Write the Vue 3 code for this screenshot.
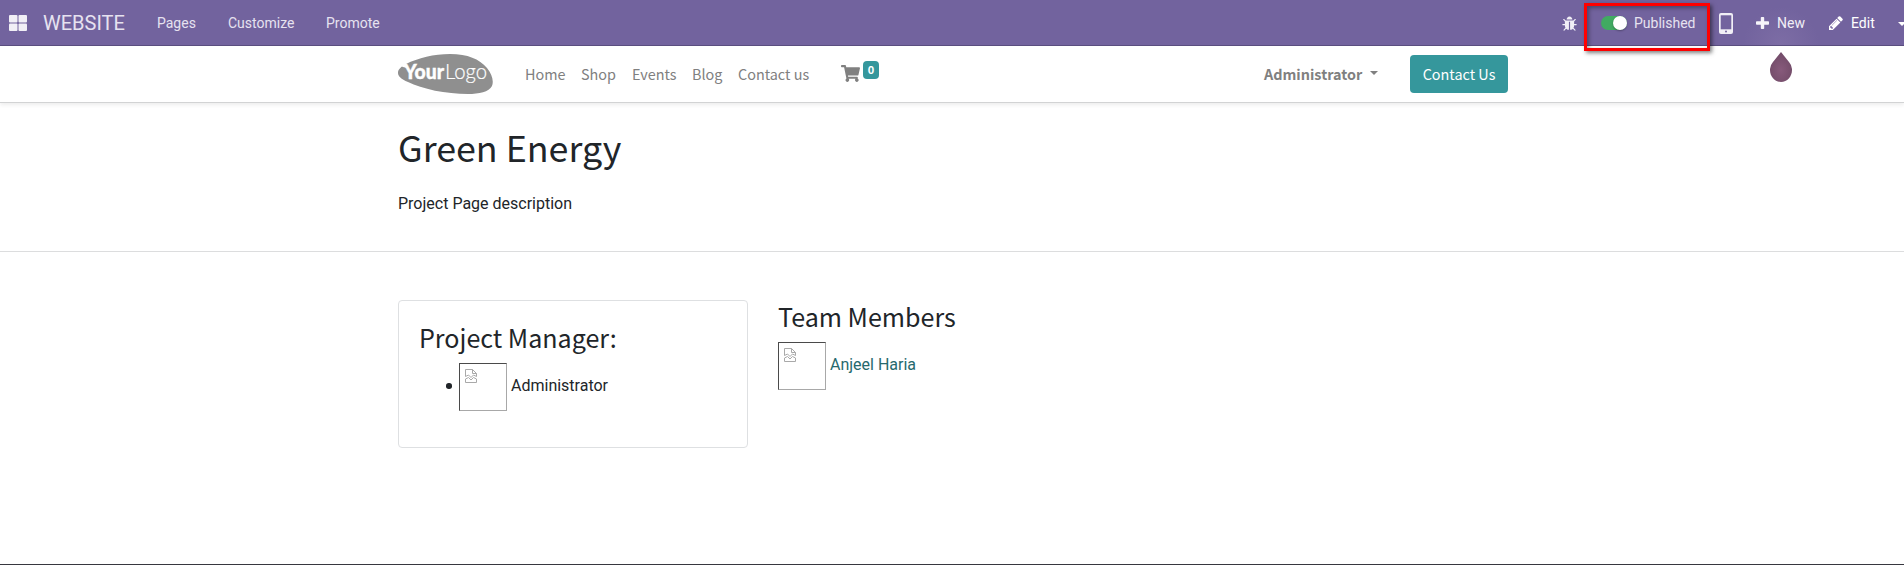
<script setup>
import { h } from 'vue'

const pages = [
  { label: 'Pages', cls: 'm-pages' },
  { label: 'Customize', cls: 'm-customize' },
  { label: 'Promote', cls: 'm-promote' }
]
const links = [
  { label: 'Home', cls: 'l-home' },
  { label: 'Shop', cls: 'l-shop' },
  { label: 'Events', cls: 'l-events' },
  { label: 'Blog', cls: 'l-blog' },
  { label: 'Contact us', cls: 'l-contact' }
]

const MissingImage = () =>
  h('span', { class: 'missing' }, [
    h('svg', { width: 12, height: 14, viewBox: '0 0 12 14', fill: 'none', stroke: '#a9a9a9' }, [
      h('path', { d: 'M.5 7.500V.5H7.500L11.500 4.500V7.500M7.500.5V4.500H11.500' }),
      h('path', { d: 'M.5 7.500L3.500 6L6 8.500L8.500 6L11.500 7.500M.5 13.500V10L3.500 8.500L6 11L8.500 8.500L11.500 10V13.500Z' })
    ])
  ])
</script>

<template>
  <div class="page">
    <header class="topbar">
      <svg class="apps" viewBox="0 0 18 16" fill="#f1eff6">
        <rect width="8.500" height="7.500" rx="1" /><rect x="9.500" width="8.500" height="7.500" rx="1" />
        <rect y="8.500" width="8.500" height="7.500" rx="1" /><rect x="9.500" y="8.500" width="8.500" height="7.500" rx="1" />
      </svg>
      <span class="brand">WEBSITE</span>
      <span v-for="p in pages" :key="p.label" class="menu" :class="p.cls">{{ p.label }}</span>
      <div class="tools">
        <svg class="bug" viewBox="64 0 1664 1664" fill="#f1eff6"><path d="M1696 960q0 26-19 45t-45 19h-224q0 171-67 290l208 209q19 19 19 45t-19 45q-18 19-45 19t-45-19l-198-197q-5 5-15 13t-42 28.500-65 36.500-82 29-97 13v-896h-128v896q-51 0-101.500-13.500t-87-33-66-39-43.500-32.500l-15-14-183 207q-20 21-48 21-24 0-43-16-19-18-20.500-44.500t15.500-46.500l202-227q-58-114-58-274h-224q-26 0-45-19t-19-45 19-45 45-19h224v-294l-173-173q-19-19-19-45t19-45 45-19 45 19l173 173h844l173-173q19-19 45-19t45 19 19 45-19 45l-173 173v294h224q26 0 45 19t19 45zm-480-576h-640q0-133 93.500-226.500t226.500-93.500 226.500 93.500 93.500 226.500z" /></svg>
        <span class="switch"><i></i></span>
        <span class="menu published">Published</span>
        <svg class="mobile" viewBox="0 0 14 21"><rect width="14" height="21" rx="2" fill="#f1eff6" /><rect x="1.700" y="2.300" width="10.600" height="14" fill="#72639e" /><circle cx="7" cy="18.500" r="1" fill="#72639e" /></svg>
        <svg class="plus" viewBox="0 0 13 12" fill="#f6f4fa"><rect x="4.800" width="3.400" height="12" rx=".8" /><rect y="4.300" width="13" height="3.400" rx=".8" /></svg>
        <span class="menu new">New</span>
        <svg class="pencil" viewBox="128 128 1536 1536" fill="#fff"><path d="M491 1536l91-91-235-235-91 91v107h128v128h107zm523-928q0-22-22-22-10 0-17 7l-542 542q-7 7-7 17 0 22 22 22 10 0 17-7l542-542q7-7 7-17zm-54-192l416 416-832 832h-416v-416zm683 96q0 53-37 90l-166 166-416-416 166-165q36-38 90-38 53 0 91 38l235 234q37 39 37 91z" /></svg>
        <span class="menu edit">Edit</span>
        <i class="caret light"></i>
      </div>
    </header>

    <nav class="sitebar">
      <svg class="logo" viewBox="0 0 95 40">
        <path d="M0 19C0 15 3 13 8 10C20 4 36 0 52 0C70 0 81 5 89 14C94 20 96 27 94 32C91 38 81 40 70 40C48 40 24 35 10 28C3 25 0 22 0 19Z" fill="#8f8f8f" />
        <path d="M3 12L8 9.500L9 14L5 13Z" fill="#fff" />
        <text x="6" y="25" class="your" textLength="40" lengthAdjust="spacingAndGlyphs">Your</text>
        <text x="47" y="25" class="logo-word" textLength="42" lengthAdjust="spacingAndGlyphs">Logo</text>
      </svg>
      <span v-for="l in links" :key="l.label" class="link" :class="l.cls">{{ l.label }}</span>
      <svg class="cart" viewBox="0 0 576 512" fill="#808080"><path d="M528.12 301.319l47.273-208C578.806 78.301 567.391 64 551.99 64H159.208l-9.166-44.810C147.758 8.021 137.930 0 126.529 0H24C10.745 0 0 10.745 0 24v16c0 13.255 10.745 24 24 24h69.883l70.248 343.435C147.325 417.100 136 435.222 136 456c0 30.928 25.072 56 56 56s56-25.072 56-56c0-15.674-6.447-29.835-16.824-40h209.647C430.447 426.165 424 440.326 424 456c0 30.928 25.072 56 56 56s56-25.072 56-56c0-22.172-12.888-41.332-31.579-50.405l5.517-24.276c3.413-15.018-8.002-29.319-23.403-29.319H218.117l-6.545-32h293.145c11.206 0 20.920-7.754 23.403-18.681z" /></svg>
      <span class="badge">0</span>
      <span class="user">Administrator</span>
      <i class="caret"></i>
      <span class="button">Contact Us</span>
    </nav>

    <section class="intro">
      <h1>Green Energy</h1>
      <p>Project Page description</p>
    </section>

    <section class="people">
      <div class="card">
        <h3>Project Manager:</h3>
        <div class="person">
          <i class="dot"></i><MissingImage /><span class="name">Administrator</span>
        </div>
      </div>
      <div class="team">
        <h3>Team Members</h3>
        <div class="person"><MissingImage /><span class="name teal">Anjeel Haria</span></div>
      </div>
    </section>

    <div class="callout"></div>
    <svg class="drop" viewBox="0 0 22 30">
      <defs><radialGradient id="plum" cx=".5" cy=".6" r=".55"><stop offset="0" stop-color="#875a7b" /><stop offset="1" stop-color="#734c69" /></radialGradient></defs>
      <path d="M11 0L19.200 10.200A11 11 0 0 1 22 18C22 24.500 17.200 30 11 30S0 24.500 0 18A11 11 0 0 1 2.800 10.200Z" fill="url(#plum)" />
    </svg>
  </div>
</template>

<style>
body { margin: 0; background: #fff; overflow: hidden; }
</style>

<style scoped>
.page { position: relative; box-sizing: border-box; width: 1904px; height: 565px; overflow: hidden; background: #fff; border-bottom: 1px solid #37373f; color: #212529; font-family: Roboto, sans-serif; font-size: 16px; }
.page span { white-space: nowrap; flex: none; }
svg, .caret { display: block; flex: none; }

.topbar { display: flex; align-items: flex-start; box-sizing: border-box; width: 1904px; height: 46px; padding-left: 9px; border-bottom: 1px solid #5b4f80; background: radial-gradient(circle at 1781px 45px, #7d6da5 0, #72639e 38px); color: #e6e2f0; overflow: hidden; }
.apps { width: 18px; height: 16px; margin-top: 15px; }
.brand { width: 114px; margin-left: 16px; font-size: 20px; line-height: 46px; }
.menu { font-size: 14px; line-height: 46px; }
.m-pages { width: 71px; }
.m-customize { width: 98px; }
.tools { display: flex; width: 342px; margin-left: auto; flex: none; }
.bug { width: 15px; height: 15px; margin-top: 15.500px; }
.switch { width: 26px; height: 14px; margin: 16px 7px 0 24px; border-radius: 7px; background: #41aa62; }
.switch i { display: block; width: 14px; height: 14px; margin-left: 12px; border-radius: 7px; background: #fff; box-shadow: 0 1px 2px rgba(0, 0, 0, .3); }
.published { width: 85px; }
.mobile { width: 14px; height: 21px; margin-top: 13px; }
.plus { width: 13px; height: 12px; margin: 17px 8px 0 23px; }
.new { width: 52px; color: #f1eff6; }
.pencil { width: 14px; height: 14px; margin: 16px 8px 0 0; }
.edit { width: 47px; color: #fff; }
.caret { width: 0; height: 0; border: 4px solid transparent; border-top-color: #808080; border-bottom: 0; }
.caret.light { margin-top: 22px; border-top-color: #fff; }

.sitebar { position: relative; display: flex; align-items: flex-start; box-sizing: border-box; width: 1904px; height: 57px; padding: 0 396px 0 398px; border-bottom: 1px solid #d2d3d4; box-shadow: 0 2px 4px rgba(0, 0, 0, .075); font-family: "Noto Sans CJK SC", sans-serif; color: #808080; }
.logo { width: 95px; height: 40px; margin: 8px 32px 0 0; }
.your { font: 900 20.500px Lato, sans-serif; fill: #fff; stroke: #fff; stroke-width: .4px; }
.logo-word { font: 300 21.500px Lato, sans-serif; fill: #fff; stroke: #fff; stroke-width: .2px; }
.link { font-size: 14.400px; line-height: 56px; }
.l-home { width: 56px; }
.l-shop { width: 51px; }
.l-events { width: 60px; }
.l-blog { width: 46px; }
.l-contact { width: 103px; }
.cart { width: 19px; height: 17px; margin-top: 19px; }
.badge { width: 16px; height: 18px; margin: 15px 0 0 3px; border-radius: 4px; background: #35979c; color: #fff; font-size: 11px; font-weight: 700; line-height: 17px; text-align: center; }
.user { width: 106px; margin-left: auto; font-size: 14.400px; font-weight: 700; line-height: 56px; }
.sitebar .caret { margin: 25px 32px 0 0; }
.button { width: 98px; height: 38px; margin-top: 9px; border-radius: 4px; background: #35979c; color: #fff; font-size: 14.400px; line-height: 38px; text-align: center; }

.intro { box-sizing: border-box; height: 149px; padding: 19px 0 0 398px; border-bottom: 1px solid #dcddde; }
h1, h3 { margin: 0; font-family: "Noto Sans CJK SC", sans-serif; font-weight: 400; }
h1 { height: 48px; font-size: 35.800px; line-height: 48px; }
p { margin: 22px 0 0; line-height: 24px; }
.people { display: flex; align-items: flex-start; padding: 48px 0 0 398px; }
.card { box-sizing: border-box; width: 350px; height: 148px; margin-right: 31px; padding: 20px 20px 0; border: 1px solid #dee0e2; border-radius: 4px; }
h3 { height: 34px; font-size: 25.070px; line-height: 34px; }
.card h3 { height: 35px; line-height: 32px; }
.team h3 { line-height: 32px; }
.person { display: flex; margin-top: 7px; }
.card .person { padding-left: 27px; }
.team .person { margin-top: 8px; }
.team { margin-left: -1px; }
.dot { width: 5.500px; height: 5.500px; margin: 20px 7.500px 0 0; border-radius: 50%; background: #212529; }
.missing { box-sizing: border-box; width: 48px; height: 48px; margin-right: 4px; padding: 4px 5px; border: 1px solid; border-color: #4a4a4a #a8a8a8 #a8a8a8 #4a4a4a; }
.name { line-height: 46px; }
.teal { color: #26696d; }

.callout { position: absolute; left: 1584px; top: 3px; box-sizing: border-box; width: 126px; height: 48px; border: 3px solid #f00; box-shadow: 2px 2px 4px rgba(0, 0, 0, .5), inset 2px 2px 4px rgba(0, 0, 0, .35); }
.drop { position: absolute; left: 1770px; top: 52px; width: 22px; height: 30px; }
</style>
